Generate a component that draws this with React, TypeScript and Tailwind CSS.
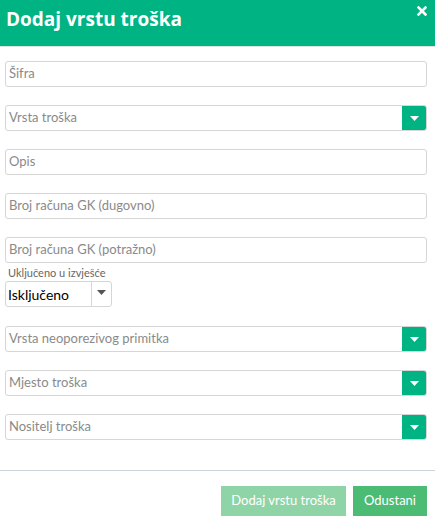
import React from "react";

const font = { fontFamily: "Lato, 'Open Sans', sans-serif" };

function Caret({ className }: { className?: string }) {
  return (
    <svg width="9" height="5" viewBox="0 0 9 5" className={className}>
      <path d="M0 0 L9 0 L4.5 5 Z" fill="currentColor" />
    </svg>
  );
}

function Input({ placeholder }: { placeholder: string }) {
  return (
    <div className="h-[26px] w-full rounded-[3px] border border-[#d6d6d6] flex items-center pl-[3px] text-[13px] text-[#8a8a8a]">
      {placeholder}
    </div>
  );
}

function Dropdown({ placeholder }: { placeholder: string }) {
  return (
    <div className="h-[26px] w-full rounded-[3px] border border-[#d6d6d6] flex items-stretch text-[13px] text-[#8a8a8a] overflow-hidden">
      <div className="flex-1 flex items-center pl-[3px]">{placeholder}</div>
      <div className="w-[25px] -my-px -mr-px bg-[#00b383] rounded-r-[3px] flex items-center justify-center text-white">
        <Caret />
      </div>
    </div>
  );
}

export default function App() {
  return (
    <div className="w-[435px] h-[525px] bg-white flex flex-col" style={font}>
      <div className="h-[46px] bg-[#00b383] border-b border-[#d9e6e0] flex items-start justify-between pl-[6px] pr-[8px] box-content">
        <div className="text-white font-bold text-[19px] leading-none mt-[10px]" style={{ fontFamily: "'Open Sans', sans-serif" }}>
          Dodaj vrstu troška
        </div>
        <svg width="10" height="10" viewBox="0 0 10 10" className="mt-[6px]">
          <path d="M1.5 1.5 L8.5 8.5 M8.5 1.5 L1.5 8.5" stroke="white" strokeWidth="2.6" strokeLinecap="square" />
        </svg>
      </div>
      <div className="flex flex-col px-[5px] pr-[8px] pt-[14px]">
        <div className="flex flex-col gap-[18px]">
          <Input placeholder="Šifra" />
          <Dropdown placeholder="Vrsta troška" />
          <Input placeholder="Opis" />
          <Input placeholder="Broj računa GK (dugovno)" />
          <Input placeholder="Broj računa GK (potražno)" />
        </div>
        <div className="text-[11px] text-[#666] leading-none mt-[4px] pl-[3px]">Uključeno u izvješće</div>
        <div className="mt-[3px] h-[26px] w-[107px] rounded-[3px] border border-[#d6d6d6] flex items-stretch text-[14px] text-black">
          <div className="flex-1 flex items-center pl-[2px]">Isključeno</div>
          <div className="w-[20px] border-l border-[#d6d6d6] flex items-start pt-[8px] justify-center text-[#555]">
            <Caret />
          </div>
        </div>
        <div className="flex flex-col gap-[18px] mt-[19px]">
          <Dropdown placeholder="Vrsta neoporezivog primitka" />
          <Dropdown placeholder="Mjesto troška" />
          <Dropdown placeholder="Nositelj troška" />
        </div>
      </div>
      <div className="mt-[30px] border-t border-[#ccd3da]" />
      <div className="flex justify-end gap-[7px] pr-[8px] pt-[15px]">
        <button className="h-[30px] w-[125px] bg-[#8fd4a6] text-white text-[13px]" style={font}>
          Dodaj vrstu troška
        </button>
        <button className="h-[30px] w-[74px] bg-[#4cbb73] text-white text-[13px]" style={font}>
          Odustani
        </button>
      </div>
    </div>
  );
}
